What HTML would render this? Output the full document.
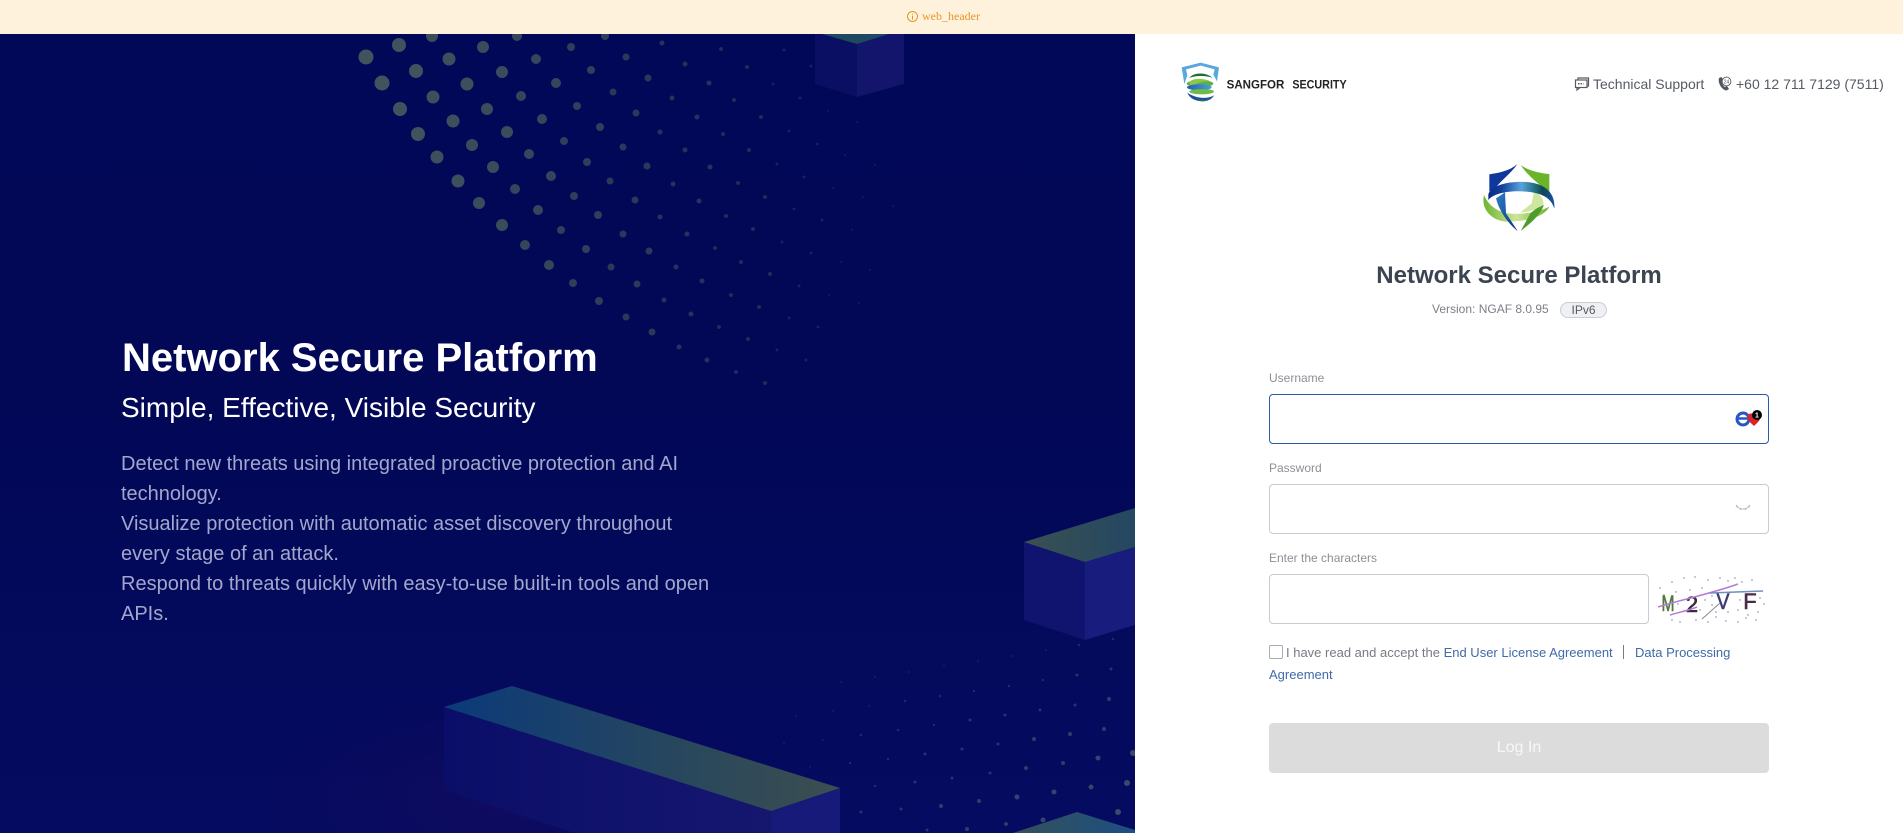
<!DOCTYPE html>
<html lang="en">
<head>
<meta charset="utf-8">
<title>Network Secure Platform</title>
<style>
html,body{margin:0;padding:0;width:1903px;height:833px;overflow:hidden;background:#fff;font-family:"Liberation Sans",sans-serif}
.a{position:absolute;white-space:nowrap}
#banner{left:0;top:0;width:1903px;height:34px;background:#fff2dd}
#left{left:0;top:34px;width:1135px;height:799px;overflow:hidden;background:radial-gradient(ellipse 260px 110px at 520px 766px,rgba(42,10,96,.28),rgba(42,10,96,0)),linear-gradient(180deg,#010857 0%,#020856 45%,#050b60 100%)}
.in{left:1269px;width:498px;height:48px;border:1px solid #c9cbce;border-radius:4px;background:#fff}
.lb{left:1269px;font-size:12px;line-height:16px;color:#8c9096}
a{color:#3f6aa8;text-decoration:none}
</style>
</head>
<body>
<div class="a" id="banner"></div>
<svg class="a" style="left:906px;top:10px" width="13" height="13" viewBox="0 0 13 13"><circle cx="6.5" cy="6.5" r="5" fill="none" stroke="#e8952b"/><path d="M6.5 3.6v1M6.5 5.6v4" stroke="#e8952b" fill="none"/></svg>
<div class="a" style="left:922px;top:8px;font:12px/16px 'Liberation Serif',serif;color:#e8952b">web_header</div>

<div class="a" id="left"></div>
<svg class="a" style="left:0;top:34px" width="1135" height="799" viewBox="0 34 1135 799">
<defs>
<linearGradient id="tf" x1="0" x2="1" y1="0" y2="0"><stop offset="0" stop-color="#0b3a7a"/><stop offset=".55" stop-color="#26465f"/><stop offset="1" stop-color="#3c4e50"/></linearGradient>
<linearGradient id="sf" x1="0" x2="1" y1="0" y2="0"><stop offset="0" stop-color="#0b0e68"/><stop offset="1" stop-color="#15176f"/></linearGradient>
<linearGradient id="tf2" x1="0" x2="1" y1="0" y2="0"><stop offset="0" stop-color="#3a5052"/><stop offset="1" stop-color="#244762"/></linearGradient>
<linearGradient id="tf3" x1="0" x2="1" y1="0" y2="0"><stop offset="0" stop-color="#33505a"/><stop offset="1" stop-color="#1d4f82"/></linearGradient>
</defs>
<g fill="none" stroke-linecap="round">
<path stroke="#41545e" stroke-width="15" d="M366 57h0M382 83h0"/>
<path stroke="#3f525e" stroke-width="14" d="M399 45h0M400 109h0M416 71h0M418 134h0"/>
<path stroke="#3c4f5d" stroke-width="13" d="M433 97h0M437 157h0M449 59h0M453 121h0M458 181h0M467 84h0"/>
<path stroke="#394c5c" stroke-width="12" d="M432 36h0M472 145h0M479 203h0M483 47h0M487 109h0M493 167h0M502 225h0M502 72h0M507 132h0"/>
<path stroke="#33465b" stroke-width="10" d="M515 189h0M517 36h0M521 96h0M525 245h0M529 154h0M536 59h0M538 210h0M542 119h0M549 265h0M551 176h0M556 83h0"/>
<path stroke="#2d3f5a" stroke-width="8" d="M561 230h0M564 141h0M571 47h0M573 283h0M574 196h0M577 106h0M586 249h0M587 162h0M591 70h0M598 215h0M599 301h0M600 127h0M605 36h0"/>
<path stroke="#283a5a" stroke-width="7" d="M610 181h0M611 267h0M613 92h0M623 147h0M623 234h0M626 57h0M626 317h0M635 200h0M636 113h0M637 284h0M647 166h0M648 78h0M649 251h0M652 332h0"/>
<path stroke="#23335a" stroke-width="5" d="M660 132h0M660 217h0M662 43h0M664 300h0M672 98h0M673 184h0M676 267h0M679 347h0M685 64h0M685 150h0M687 234h0M691 314h0M697 117h0M699 201h0M702 281h0M707 360h0M709 83h0M710 167h0"/>
<path stroke="#1e2d5a" stroke-width="4" d="M715 248h0M719 327h0M721 49h0M723 134h0M726 216h0M731 295h0M734 100h0M736 372h0M738 183h0M741 262h0M747 67h0M748 339h0M749 150h0M753 229h0M759 307h0M761 117h0M765 197h0M765 383h0M770 274h0"/>
<path stroke="#162459" stroke-width="3" d="M773 84h0M777 164h0M777 350h0M782 242h0M784 50h0M789 131h0M789 318h0M794 209h0M799 286h0M800 98h0M804 177h0M806 360h0M811 66h0M811 253h0M817 144h0M818 327h0M822 220h0"/>
<path stroke="#111d58" stroke-width="2" d="M828 111h0M829 295h0M833 188h0M841 262h0M845 155h0M852 230h0M857 122h0M859 303h0M863 197h0M870 270h0M875 165h0M893 206h0"/>
<path stroke="#3a4a6c" stroke-width="6" d="M1118 812h0M1127 783h0M1133 753h0"/>
<path stroke="#34446c" stroke-width="5" d="M1091 787h0M1098 758h0M1081 817h0M1054 792h0M1043 820h0M1017 797h0"/>
<path stroke="#2e3d6c" stroke-width="4" d="M1063 763h0M1026 768h0M1006 824h0M1104 729h0M1070 734h0M1034 739h0M1109 699h0M979 801h0M941 806h0M967 829h0"/>
<path stroke="#27346a" stroke-width="3" d="M990 773h0M952 778h0M915 782h0M901 809h0M927 830h0M998 744h0M962 749h0M925 754h0M1075 705h0M1040 710h0M1005 715h0M970 720h0M1111 669h0M1077 675h0M861 812h0"/>
<path stroke="#1f2a66" stroke-width="2.5" d="M875 786h0M888 759h0M850 763h0M934 725h0M898 730h0M861 735h0M1043 680h0M1009 686h0M974 691h0M940 696h0M905 701h0M1113 639h0M1079 645h0"/>
<path stroke="#161f60" stroke-width="2" d="M810 767h0M823 740h0M784 743h0M833 711h0M796 716h0M869 706h0M909 672h0M875 677h0M1046 650h0M1012 656h0M978 661h0M944 666h0M841 682h0"/>
</g>
<!-- top cube -->
<polygon points="815,34 822,34 857,44 857,97 815,84" fill="#0b0f63"/>
<polygon points="857,44 889,34 904,34 904,84 857,97" fill="#12156b"/>
<polygon points="822,34 889,34 857,44" fill="#1d4a60"/>
<!-- right cube -->
<polygon points="1024,542 1085,562 1085,640 1024,620" fill="#10146e"/>
<polygon points="1085,562 1135,547 1135,625 1085,640" fill="#181c7c"/>
<polygon points="1024,542 1135,508 1135,547 1085,562" fill="url(#tf2)"/>
<!-- big cuboid -->
<polygon points="444,707 771,811 771,833 575,833 444,790" fill="url(#sf)"/>
<polygon points="771,811 840,788 840,833 771,833" fill="#171a78"/>
<polygon points="512,686 840,788 771,811 444,707" fill="url(#tf)"/>
<!-- lower-right cube -->
<polygon points="1077,812 1135,830 1135,833 1013,833" fill="url(#tf3)"/>
</svg>

<div class="a" style="left:122px;top:335px;font-size:40px;line-height:46px;font-weight:bold;color:#fff">Network Secure Platform</div>
<div class="a" style="left:121px;top:391px;font-size:28px;line-height:34px;color:#fff">Simple, Effective, Visible Security</div>
<div class="a" style="left:121px;top:449px;font-size:20px;line-height:30px;color:#a3a7cc">Detect new threats using integrated proactive protection and AI<br>technology.<br>Visualize protection with automatic asset discovery throughout<br>every stage of an attack.<br>Respond to threats quickly with easy-to-use built-in tools and open<br>APIs.</div>

<!-- small logo -->
<svg class="a" style="left:1170px;top:50px" width="200" height="60" viewBox="0 0 600 180">
<defs><linearGradient id="sg" x1="0" x2="1"><stop offset="0" stop-color="#1f62b0"/><stop offset="1" stop-color="#4c9fdc"/></linearGradient></defs>
<path d="M35 52 92 38 147 52 141 94 130 74 134 58 92 47 48 58 52 76 43 102Z" fill="#5aa7de"/>
<path d="M58 84C70 66 110 66 128 84 110 76 76 76 58 84Z" fill="#1f6b3a"/>
<ellipse cx="90" cy="101" rx="40" ry="10" fill="#5cb04a"/>
<path d="M58 96C68 84 100 84 122 94 100 92 76 100 66 108 60 106 58 102 58 96Z" fill="#8cc64a"/>
<ellipse cx="88" cy="112" rx="37" ry="9" fill="url(#sg)"/>
<ellipse cx="95" cy="125" rx="37" ry="8" fill="#6fbb48"/>
<path d="M52 128C62 158 118 164 132 136 112 148 76 146 52 128Z" fill="#1d4f9e"/>
<path d="M76 146C90 152 108 152 120 146 108 156 90 156 76 146Z" fill="#2a7a4a"/>
<g font-family="Liberation Sans" font-weight="bold" font-size="37" fill="#222">
<text x="170" y="115" textLength="173" lengthAdjust="spacingAndGlyphs">SANGFOR</text>
<text x="367" y="115" textLength="163" lengthAdjust="spacingAndGlyphs">SECURITY</text>
</g>
</svg>

<!-- support -->
<svg class="a" style="left:1574px;top:76px" width="16" height="16" viewBox="0 0 16 16" fill="none" stroke="#555a63" stroke-width="1.2"><path d="M4 3.5V2h10.5v8H13"/><rect x="1.5" y="4" width="11.5" height="7.5"/><path d="M3 11.5v2.5l3-2.500"/><path d="M4 7.700h5.500" stroke-dasharray="1.500 1" stroke-width="1.500"/></svg>
<div class="a" style="left:1593px;top:76px;font-size:14px;line-height:16px;color:#555a63">Technical Support</div>
<svg class="a" style="left:1716px;top:76px" width="16" height="16" viewBox="0 0 16 16"><path d="M3 2 5.500 1 7.500 4.500 6 6C6 8 7.500 10 9 11L11 10 13 13 10.500 14.500C6 14 1.500 7 3 2Z" fill="#50555e"/><circle cx="10.500" cy="5.500" r="4.400" fill="#fff" stroke="#50555e" stroke-width=".9"/><text x="10.500" y="7.400" font-family="Liberation Sans" font-size="5" text-anchor="middle" fill="#50555e">24</text></svg>
<div class="a" style="left:1736px;top:76px;font-size:14px;line-height:16px;color:#555a63">+60 12 711 7129 (7511)</div>

<!-- main logo -->
<svg class="a" style="left:1460px;top:150px" width="120" height="100" viewBox="0 0 360 300">
<defs>
<linearGradient id="band" x1="0" x2="1"><stop offset="0" stop-color="#0a2a86"/><stop offset=".2" stop-color="#123f9c"/><stop offset=".5" stop-color="#5aa2dc"/><stop offset=".72" stop-color="#1d6a7c"/><stop offset=".82" stop-color="#0e4650"/><stop offset="1" stop-color="#1c4fa6"/></linearGradient>
<linearGradient id="low" x1="0" x2="1"><stop offset="0" stop-color="#6cb52e"/><stop offset=".5" stop-color="#cfe49a"/><stop offset="1" stop-color="#6cb52e"/></linearGradient>
<linearGradient id="bl" x1="0" y1="0" x2="1" y2="1"><stop offset="0" stop-color="#2f7fc8"/><stop offset="1" stop-color="#0b2f80"/></linearGradient>
</defs>
<path d="M172 42C150 62 120 68 88 73V125L108 112C125 90 155 68 172 42Z" fill="#10379a"/>
<path d="M182 45C205 62 240 70 268 72V130L240 105C220 88 198 70 182 45Z" fill="#6ab42c"/>
<path d="M222 124C240 130 252 145 250 165 235 178 205 186 180 188L215 160Z" fill="#cfe6a0"/>
<path d="M72 135C62 178 95 212 140 215 190 215 250 205 268 170 240 185 190 195 145 190 110 185 85 165 72 135Z" fill="url(#low)"/>
<path d="M85 132C100 100 160 92 210 97 250 102 287 125 283 176 275 150 255 130 200 125 150 120 100 130 85 150Z" fill="url(#band)"/>
<path d="M108 145 135 127 138 190 173 243C150 225 120 190 108 145Z" fill="url(#bl)"/>
<path d="M182 243C215 218 240 195 252 165 235 172 222 178 210 192Z" fill="#4f9c2a"/>
</svg>

<div class="a" style="left:1269px;width:500px;top:262px;text-align:center;font-size:24px;line-height:28px;font-weight:bold;color:#3d4451">Network Secure Platform</div>
<div class="a" style="left:1432px;top:301px;font-size:12px;line-height:16px;color:#7b7f87">Version: NGAF 8.0.95</div>
<div class="a" style="left:1560px;top:302px;width:45px;height:14px;border:1px solid #c8cdd4;border-radius:8px;background:#eef0f3;text-align:center;font-size:12px;line-height:14px;color:#555a63">IPv6</div>

<div class="a lb" style="top:370px">Username</div>
<div class="a in" style="top:394px;border-color:#2b5aa8"></div>
<svg class="a" style="left:1734px;top:406px" width="28" height="24" viewBox="0 0 28 24"><circle cx="9" cy="13" r="6" fill="none" stroke="#2a55c4" stroke-width="3"/><path d="M4 12.500H14" stroke="#2a55c4" stroke-width="2.500"/><path d="M13.500 11C13.500 6.500 20 6.500 20 10.500 20 6.500 26.500 6.500 26.500 11 26.500 14.500 22 18 20 20 18 18 13.500 14.500 13.500 11Z" fill="#d9242a"/><circle cx="23" cy="9" r="5" fill="#000"/><text x="23" y="11.500" font-family="Liberation Sans" font-size="7" font-weight="bold" text-anchor="middle" fill="#fff">1</text></svg>

<div class="a lb" style="top:460px">Password</div>
<div class="a in" style="top:484px"></div>
<svg class="a" style="left:1734px;top:503px" width="18" height="10" viewBox="0 0 18 10" fill="none" stroke="#bdbdbd" stroke-width="1"><path d="M2 3C6 7 12 7 16 3M2 2 4 4M6 5 6.500 7M12 5 11.500 7M16 2 14 4"/></svg>

<div class="a lb" style="top:550px">Enter the characters</div>
<div class="a in" style="top:574px;width:378px"></div>

<svg class="a" style="left:1656px;top:574px" width="112" height="52" viewBox="1656 574 112 52">
<g font-family="Liberation Sans" font-size="22" text-anchor="middle" stroke-width=".6">
<text x="1668" y="611" fill="#4d7a3a" stroke="#4d7a3a" textLength="13" lengthAdjust="spacingAndGlyphs">M</text>
<text x="1692" y="612" fill="#3a2a3a" stroke="#3a2a3a">2</text>
<text x="1723" y="609" fill="#3a3a78" stroke="#3a3a78" textLength="13" lengthAdjust="spacingAndGlyphs">V</text>
<text x="1750" y="609" fill="#4a2a48" stroke="#4a2a48">F</text>
</g>
<g fill="none" stroke-width="1.500">
<path d="M1658 607C1680 600 1710 594 1738 584" stroke="#b57cd6"/>
<path d="M1670 615C1680 612 1690 610 1697 607" stroke="#b57cd6"/>
<path d="M1710 593 1763 591" stroke="#6f8fc0"/>
<path d="M1702 619 1720 603" stroke="#8a8a8a" stroke-width="1"/>
</g>
<path fill="none" stroke-linecap="round" stroke-width="1.400" stroke="#7a7a90" d="M1660 588h0M1672 582h0M1684 578h0M1695 577h0M1708 580h0M1720 578h0M1728 581h0M1735 578h0M1742 582h0M1752 580h0M1664 595h0M1676 592h0M1690 590h0M1702 588h0M1712 596h0M1728 612h0M1738 610h0M1748 615h0M1758 612h0M1764 604h0M1672 620h0M1680 622h0M1696 620h0M1708 622h0M1716 617h0M1726 621h0M1738 622h0M1746 618h0M1756 620h0M1705 600h0M1712 605h0M1700 610h0M1716 612h0M1740 600h0M1760 598h0M1678 604h0"/>
</svg>

<div class="a" style="left:1269px;top:645px;width:12px;height:12px;border:1px solid #a9adb3;border-radius:2px;background:#fff"></div>
<div class="a" style="left:1286px;top:642px;font-size:13px;line-height:22px;color:#777b82">I have read and accept the <a>End User License Agreement</a></div>
<div class="a" style="left:1623px;top:645px;width:1px;height:14px;background:#777b82"></div>
<div class="a" style="left:1635px;top:642px;font-size:13px;line-height:22px"><a>Data Processing</a></div>
<div class="a" style="left:1269px;top:664px;font-size:13px;line-height:22px"><a>Agreement</a></div>

<div class="a" style="left:1269px;top:723px;width:500px;height:50px;border-radius:4px;background:#dcdcdc;text-align:center;font-size:16px;line-height:50px;color:#f7f7f7">Log In</div>
</body>
</html>
